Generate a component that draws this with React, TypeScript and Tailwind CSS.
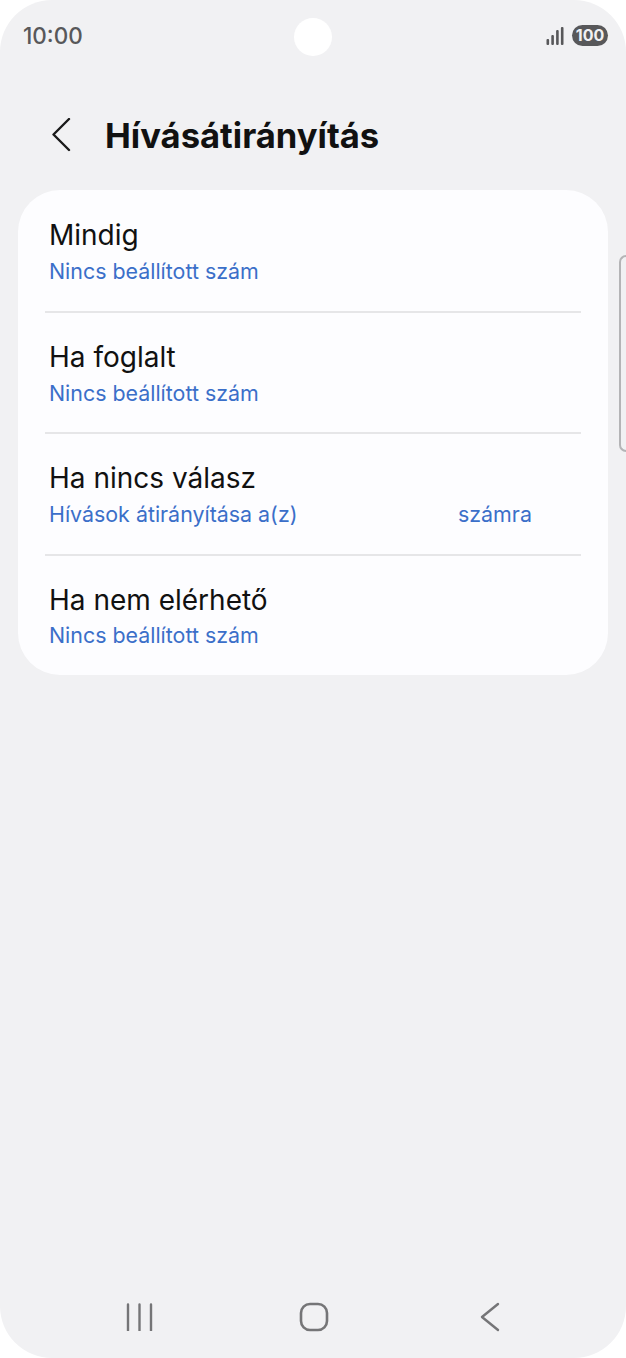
const rows = [
  { title: "Mindig", sub: "Nincs beállított szám", box: "h-[121px] pt-[26px]", gap: "mt-[2px]" },
  { title: "Ha foglalt", sub: "Nincs beállított szám", box: "h-[119px] pt-[25px]", gap: "mt-[2px]" },
  { title: "Ha nincs válasz", sub: "Hívások átirányítása a(z)", extra: "számra", box: "h-[120px] pt-[25px]", gap: "mt-[2px]" },
  { title: "Ha nem elérhető", sub: "Nincs beállított szám", box: "h-[119px] pt-[25px]", gap: "mt-[1px]" },
];

function SignalIcon() {
  return (
    <svg width="19" height="20" viewBox="0 0 19 20" fill="#58585a">
      <rect x="0.5" y="14" width="2.6" height="6" rx="1" />
      <rect x="5.3" y="10" width="2.6" height="10" rx="1" />
      <rect x="10.1" y="5" width="2.6" height="15" rx="1" />
      <rect x="14.9" y="2" width="2.6" height="18" rx="1" />
    </svg>
  );
}

export default function App() {
  return (
    <div className="bg-white w-[626px] h-[1358px]" style={{ fontFamily: "Inter, 'Noto Sans', sans-serif" }}>
      <div className="relative flex flex-col w-full h-full overflow-hidden rounded-[52px] bg-[#f1f1f3]">
        {/* status bar */}
        <div className="flex items-center justify-between h-[70px] pl-[23px] pr-[18px]">
          <span className="pt-[2px] text-[22.5px] font-medium leading-none text-[#58585a]">10:00</span>
          <div className="flex items-center gap-[7px]">
            <SignalIcon />
            <span className="flex items-center justify-center w-[36px] h-[21px] rounded-full bg-[#58585a] text-[16px] font-bold leading-none text-[#f1f1f3]">100</span>
          </div>
        </div>

        {/* camera hole */}
        <div className="absolute left-[294px] top-[18px] w-[38px] h-[38px] rounded-full bg-white" />

        {/* header */}
        <div className="flex items-center h-[60px] mt-[35px] pl-[52px]">
          <svg width="20" height="34" viewBox="0 0 20 34" fill="none" stroke="#1a1a1a" strokeWidth="2.4" strokeLinecap="round" strokeLinejoin="round">
            <path d="M17 1 L1.5 16.5 L17 32" />
          </svg>
          <h1 className="ml-[33px] text-[34.6px] font-bold leading-none text-[#111]">Hívásátirányítás</h1>
        </div>

        {/* list card */}
        <div className="mt-[25px] mx-[18px] rounded-[42px] bg-[#fdfdff]">
          {rows.map((r, i) => (
            <div key={r.title}>
              {i > 0 && <div className="mx-[27px] h-[2px] bg-[#e6e6e8]" />}
              <div className={`${r.box} pl-[31px]`}>
                <div className="text-[28px] leading-[38px] text-[#111]">{r.title}</div>
                <div className={`flex ${r.gap} text-[21.4px] leading-[30px] text-[#3b6fc9]`}>
                  <span className="w-[409px]">{r.sub}</span>
                  {r.extra && <span>{r.extra}</span>}
                </div>
              </div>
            </div>
          ))}
        </div>

        {/* scroll handle */}
        <div className="absolute right-0 top-[255px] w-[7px] h-[197px] rounded-l-[8px] border-2 border-r-0 border-[#b4b4b6]" />

        {/* nav bar */}
        <div className="flex items-center mt-auto mb-[24px] h-[34px] pl-[126px]">
          <svg width="28" height="28" viewBox="0 0 28 28" fill="none" stroke="#757577" strokeWidth="2.4" strokeLinecap="round">
            <path d="M2 1.5V27.5M13.5 1.5V27.5M25 1.5V27.5" />
          </svg>
          <svg className="ml-[145px]" width="30" height="30" viewBox="0 0 30 30" fill="none" stroke="#757577" strokeWidth="2.6">
            <rect x="2" y="2" width="26" height="26" rx="9" />
          </svg>
          <svg className="ml-[151px]" width="20" height="30" viewBox="0 0 20 30" fill="none" stroke="#757577" strokeWidth="2.4" strokeLinecap="round" strokeLinejoin="round">
            <path d="M18 2 L2 15 L18 28" />
          </svg>
        </div>
      </div>
    </div>
  );
}
